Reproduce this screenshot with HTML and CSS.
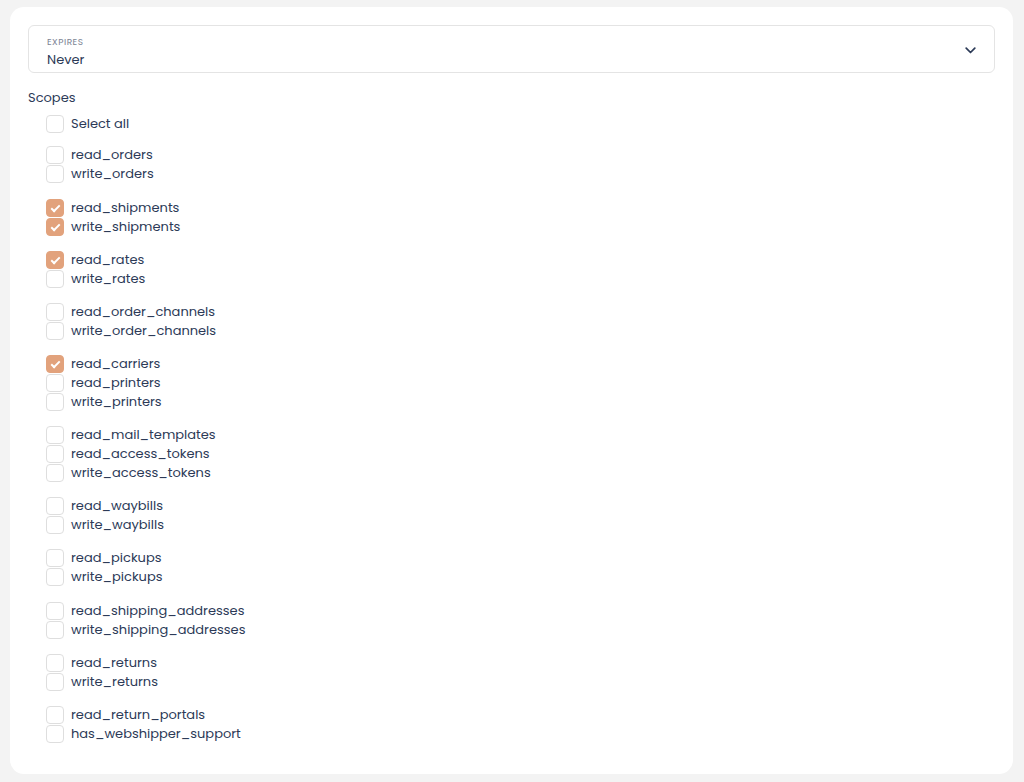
FILE: index.html
```html
<!DOCTYPE html>
<html lang="en">
<head>
  <meta charset="UTF-8">
  <title>Access token</title>
  <link rel="stylesheet" href="styles.css">
</head>
<body>
  <div class="card">
    <div class="select">
      <div class="select-text">
        <span class="select-label">Expires</span>
        <span class="select-value">Never</span>
      </div>
      <svg class="chevron" width="11" height="7" viewBox="0 0 11 7"><path d="M1.2 1.2l4.3 4.3 4.3-4.3" fill="none" stroke="#2c3a57" stroke-width="1.7" stroke-linecap="round" stroke-linejoin="round"/></svg>
    </div>

    <div class="scopes-title">Scopes</div>

    <div class="scopes">
      <div class="group first">
        <label class="check"><span class="box"></span>Select all</label>
      </div>
      <div class="group">
        <label class="check"><span class="box"></span>read_orders</label>
        <label class="check"><span class="box"></span>write_orders</label>
      </div>
      <div class="group">
        <label class="check"><span class="box on"></span>read_shipments</label>
        <label class="check"><span class="box on"></span>write_shipments</label>
      </div>
      <div class="group">
        <label class="check"><span class="box on"></span>read_rates</label>
        <label class="check"><span class="box"></span>write_rates</label>
      </div>
      <div class="group">
        <label class="check"><span class="box"></span>read_order_channels</label>
        <label class="check"><span class="box"></span>write_order_channels</label>
      </div>
      <div class="group">
        <label class="check"><span class="box on"></span>read_carriers</label>
        <label class="check"><span class="box"></span>read_printers</label>
        <label class="check"><span class="box"></span>write_printers</label>
      </div>
      <div class="group">
        <label class="check"><span class="box"></span>read_mail_templates</label>
        <label class="check"><span class="box"></span>read_access_tokens</label>
        <label class="check"><span class="box"></span>write_access_tokens</label>
      </div>
      <div class="group">
        <label class="check"><span class="box"></span>read_waybills</label>
        <label class="check"><span class="box"></span>write_waybills</label>
      </div>
      <div class="group">
        <label class="check"><span class="box"></span>read_pickups</label>
        <label class="check"><span class="box"></span>write_pickups</label>
      </div>
      <div class="group">
        <label class="check"><span class="box"></span>read_shipping_addresses</label>
        <label class="check"><span class="box"></span>write_shipping_addresses</label>
      </div>
      <div class="group">
        <label class="check"><span class="box"></span>read_returns</label>
        <label class="check"><span class="box"></span>write_returns</label>
      </div>
      <div class="group">
        <label class="check"><span class="box"></span>read_return_portals</label>
        <label class="check"><span class="box"></span>has_webshipper_support</label>
      </div>
    </div>
  </div>
</body>
</html>
```

FILE: styles.css
```css
body {
  margin: 0;
  background-color: #f3f3f3;
  font-family: Poppins, Inter, "Noto Sans", sans-serif;
  color: #2c3a57;
}

.card {
  margin: 7px 11px 7px 10px;
  background: white;
  border-radius: 14px;
  padding: 18px 18px 31px;
}

.select {
  height: 48px;
  box-sizing: border-box;
  border: 1px solid #e4e4e4;
  border-radius: 6px;
  display: flex;
  align-items: center;
  justify-content: space-between;
  padding: 0 18px 0 18px;
}

.select-text {
  display: flex;
  flex-direction: column;
  gap: 3px;
  padding-top: 7px;
}

.select-label {
  font-size: 9px;
  text-transform: uppercase;
  color: #7d8494;
  letter-spacing: 0.5px;
  line-height: 12px;
}

.select-value {
  font-size: 13px;
  line-height: 18px;
}

.chevron {
  margin-top: 2px;
}

.scopes-title {
  font-size: 13px;
  margin-top: 16px;
  line-height: 18px;
}

.scopes {
  padding-left: 18px;
  margin-top: 7px;
  display: flex;
  flex-direction: column;
  gap: 14.15px;
}

.group {
  display: flex;
  flex-direction: column;
}

.group.first {
  margin-bottom: -1.2px;
}

.check {
  display: flex;
  align-items: center;
  gap: 7px;
  height: 19px;
  font-size: 13px;
}

.box {
  width: 18px;
  height: 18px;
  box-sizing: border-box;
  border: 1px solid #dedede;
  border-radius: 4px;
  position: relative;
}

.box.on {
  background-color: #e2a27c;
  border-color: #e2a27c;
}

.box.on::after {
  content: "";
  position: absolute;
  left: 6px;
  top: 3px;
  width: 3px;
  height: 7px;
  border: solid white;
  border-width: 0 2px 2px 0;
  transform: rotate(45deg);
}
```
